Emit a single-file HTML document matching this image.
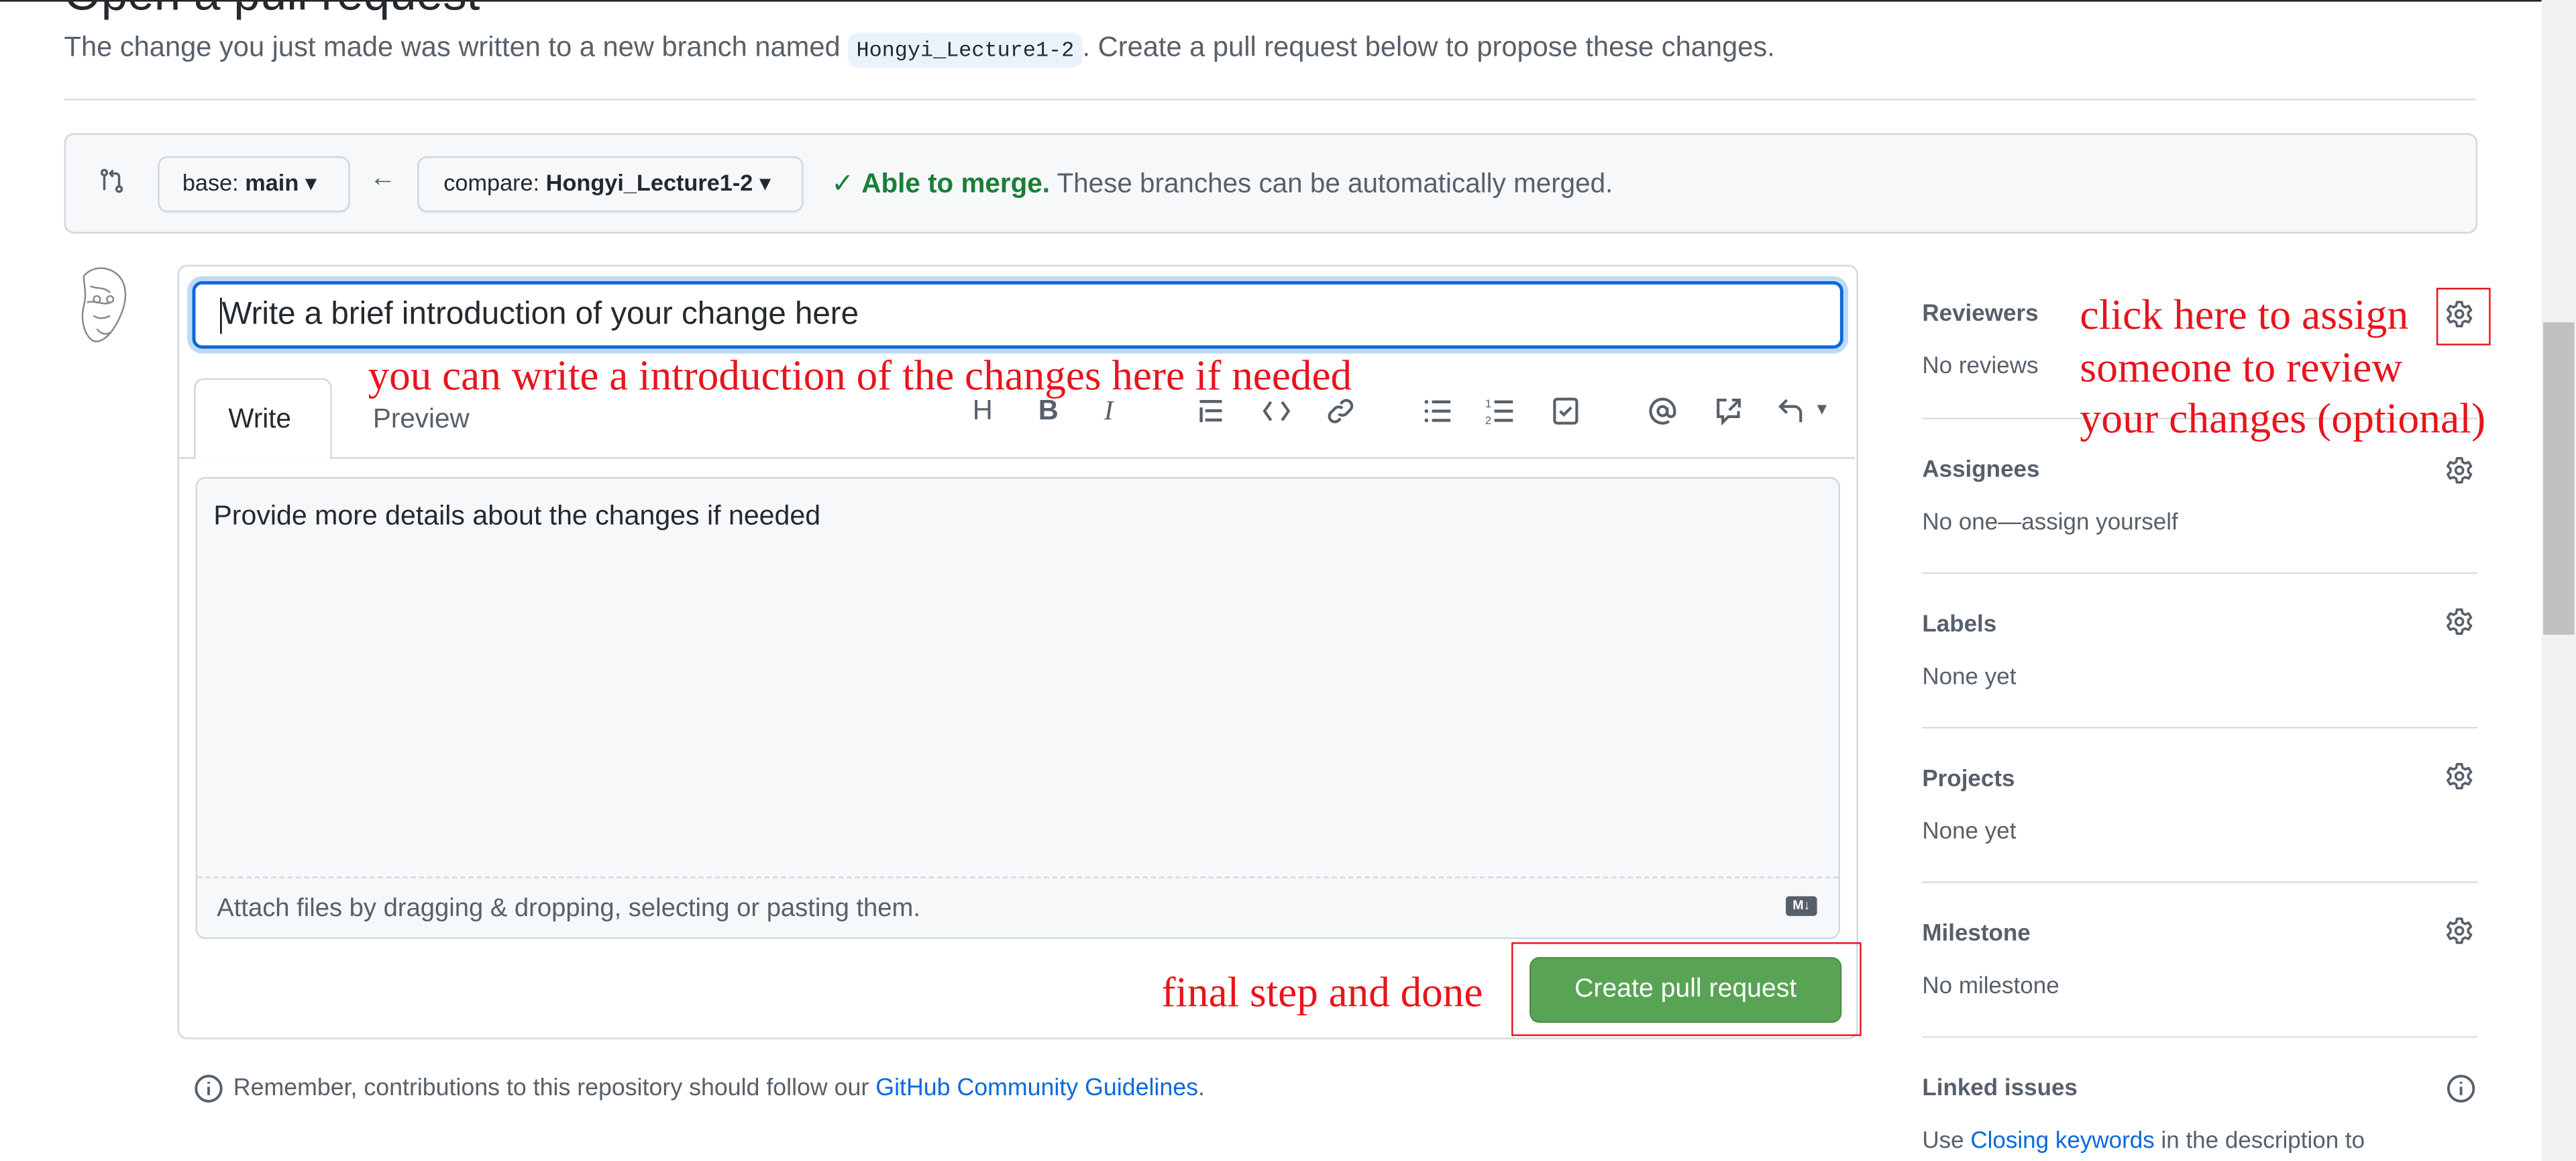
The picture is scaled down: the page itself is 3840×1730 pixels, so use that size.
<!DOCTYPE html>
<html><head><meta charset="utf-8"><style>
html,body{margin:0;padding:0;background:#fff;overflow:hidden}
body{width:3840px;height:1730px;position:relative}
#s{position:absolute;left:0;top:0;width:1568px;height:706px;transform:scale(2.449,2.4504);transform-origin:0 0;font-family:"Liberation Sans",sans-serif;color:#24292f;font-size:14px}
.a{position:absolute;white-space:nowrap}
.red{color:#e8141c;font-family:"Liberation Serif",serif;font-size:24px}
.btn{position:absolute;background:#f6f8fa;border:1px solid #d0d7de;border-radius:6px;box-shadow:0 1px 0 rgba(27,31,36,.04);font-size:14px;line-height:31px;color:#24292f}
.sb{position:absolute;left:1170px;font-size:14.3px;color:#57606a}
.sh{font-weight:bold}
.hr{position:absolute;left:1170px;width:338px;height:1px;background:#d8dee4}
.gear{position:absolute;left:1488px;width:18px;height:18px}
.ic{position:absolute;top:241px;width:18px;height:18px}
</style></head><body><div id="s">
<div class="a" style="left:0;top:0;width:1547px;height:1px;background:#222"></div>
<div class="a" style="left:39px;top:-19px;font-size:29px;color:#24292f">Open a pull request</div>
<div class="a" style="left:39px;top:19px;font-size:17px;color:#57606a">The change you just made was written to a new branch named <span style="font-family:'Liberation Mono',monospace;font-size:13px;background:#eaf2fc;color:#24292f;padding:3px 5px;border-radius:6px">Hongyi_Lecture1-2</span>. Create a pull request below to propose these changes.</div>
<div class="a" style="left:39px;top:60px;width:1468px;height:1px;background:#d8dee4"></div>
<div class="a" style="left:39px;top:81px;width:1467px;height:59px;background:#f6f8fa;border:1px solid #d0d7de;border-radius:6px"></div>
<svg class="a" style="left:60px;top:102px" width="16" height="16" viewBox="0 0 16 16" fill="none" stroke="#57606a" stroke-width="1.4"><circle cx="3.5" cy="3" r="1.6"/><path d="M3.5 4.6v9"/><circle cx="12.5" cy="13" r="1.6"/><path d="M12.5 11.4V5.5a2 2 0 0 0-2-2H7M8.8 1.5L7 3.5l1.8 2"/></svg>
<div class="btn" style="left:96px;top:95px;width:115px;height:32px;"><span style="padding-left:14px">base: <b>main</b> ▾</span></div>
<div class="a" style="left:225px;top:100px;font-size:16px;color:#57606a">←</div>
<div class="btn" style="left:254px;top:95px;width:233px;height:32px;"><span style="padding-left:15px">compare: <b>Hongyi_Lecture1-2</b> ▾</span></div>
<div class="a" style="left:506px;top:102px;font-size:16.5px;color:#57606a"><span style="color:#1a7f37">✓ <b>Able to merge.</b></span> These branches can be automatically merged.</div>
<svg class="a" style="left:43px;top:160px" width="38" height="50" viewBox="0 0 38 50" fill="none" stroke="#888" stroke-width="1"><path d="M8 8c6-8 20-6 24 4s-2 22-6 28-10 10-14 6-6-12-4-20 0-12 0-18z"/><path d="M12 14c4 2 8 0 12 4M10 24c4-2 10 2 14 0M14 32c3 2 6 2 10 0M16 40c2 3 6 4 8 2"/><circle cx="16" cy="22" r="2"/><circle cx="24" cy="22" r="2"/></svg>
<div class="a" style="left:108px;top:161px;width:1021px;height:469px;border:1px solid #d0d7de;border-radius:6px"></div>
<div class="a" style="left:117px;top:171px;width:1001px;height:37px;border:2px solid #0969da;border-radius:6px;box-shadow:0 0 0 3px rgba(9,105,218,.25);background:#fff"></div>
<div class="a" style="left:135px;top:180px;font-size:19.4px;color:#24292f">Write a brief introduction of your change here</div>
<div class="a" style="left:134px;top:181px;width:1px;height:22px;background:#000"></div>
<div class="a" style="left:109px;top:278px;width:1020px;height:1px;background:#d0d7de"></div>
<div class="a" style="left:118px;top:230px;width:82px;height:48px;border:1px solid #d0d7de;border-bottom:none;border-radius:6px 6px 0 0;background:#fff"></div>
<div class="a" style="left:139px;top:246px;font-size:16.5px">Write</div>
<div class="a" style="left:227px;top:246px;font-size:16.5px;color:#57606a">Preview</div>
<div class="a red" style="left:224px;top:214px;font-size:25.8px">you can write a introduction of the changes here if needed</div>
<div class="a" style="left:592px;top:240px;font-size:17px;color:#57606a;font-weight:normal">H</div>
<div class="a" style="left:632px;top:240px;font-size:17px;color:#57606a;font-weight:bold">B</div>
<div class="a" style="left:672px;top:240px;font-size:17px;color:#57606a;font-style:italic;font-family:'Liberation Serif',serif">I</div>
<svg class="ic" style="left:728px" viewBox="0 0 16 16" fill="#57606a"><rect x="2" y="2" width="12" height="1.6"/><rect x="2" y="6" width="1.6" height="8"/><rect x="5" y="7" width="9" height="1.6"/><rect x="5" y="12" width="9" height="1.6"/></svg>
<svg class="ic" style="left:768px" viewBox="0 0 16 16" fill="none" stroke="#57606a" stroke-width="1.5"><path d="M5 3L1.5 8 5 13M11 3l3.5 5L11 13"/></svg>
<svg class="ic" style="left:807px" viewBox="0 0 16 16" fill="none" stroke="#57606a" stroke-width="1.5"><path d="M7 9.5a3 3 0 0 0 4 0l2.5-2.5a3 3 0 0 0-4.2-4.2L8 4M9 6.5a3 3 0 0 0-4 0L2.5 9a3 3 0 0 0 4.2 4.2L8 12"/></svg>
<svg class="ic" style="left:866px" viewBox="0 0 16 16" fill="#57606a"><circle cx="2" cy="3" r="1"/><circle cx="2" cy="8" r="1"/><circle cx="2" cy="13" r="1"/><rect x="5" y="2.2" width="10" height="1.6"/><rect x="5" y="7.2" width="10" height="1.6"/><rect x="5" y="12.2" width="10" height="1.6"/></svg>
<svg class="ic" style="left:904px" viewBox="0 0 16 16" fill="#57606a"><text x="0" y="6" font-size="6" font-family="Liberation Sans">1</text><text x="0" y="15" font-size="6" font-family="Liberation Sans">2</text><rect x="5" y="2.2" width="10" height="1.6"/><rect x="5" y="7.2" width="10" height="1.6"/><rect x="5" y="12.2" width="10" height="1.6"/></svg>
<svg class="ic" style="left:944px" viewBox="0 0 16 16" fill="none" stroke="#57606a" stroke-width="1.5"><rect x="2" y="1.5" width="12" height="13" rx="1.5"/><path d="M5 8l2 2 4-4"/></svg>
<svg class="ic" style="left:1003px" viewBox="0 0 16 16" fill="none" stroke="#57606a" stroke-width="1.5"><circle cx="8" cy="8" r="2.5"/><path d="M10.5 6v3a2 2 0 0 0 4 0V8a6.5 6.5 0 1 0-3 5.5"/></svg>
<svg class="ic" style="left:1043px" viewBox="0 0 16 16" fill="none" stroke="#57606a" stroke-width="1.5"><path d="M7 2H2.5v9H5v3l3-3h5.5V8M10 2h4v4M14 2L8.5 7.5"/></svg>
<svg class="ic" style="left:1082px" viewBox="0 0 16 16" fill="none" stroke="#57606a" stroke-width="1.5"><path d="M5 2L1.5 5.5 5 9M1.5 5.5H9a3.5 3.5 0 0 1 3.5 3.5v5"/></svg>
<div class="a" style="left:1104px;top:244px;font-size:10px;color:#57606a">▼</div>
<div class="a" style="left:119px;top:290px;width:999px;height:279px;background:#f6f8fa;border:1px solid #d0d7de;border-radius:6px"></div>
<div class="a" style="left:120px;top:533px;width:999px;height:0;border-top:1px dashed #d0d7de"></div>
<div class="a" style="left:130px;top:304px;font-size:16.8px">Provide more details about the changes if needed</div>
<div class="a" style="left:132px;top:544px;font-size:15.6px;color:#57606a">Attach files by dragging &amp; dropping, selecting or pasting them.</div>
<div class="a" style="left:1087px;top:545px;width:19px;height:12px;background:#57606a;border-radius:2px;color:#fff;font-size:8px;font-weight:bold;line-height:12px;text-align:center">M↓</div>
<div class="a" style="left:931px;top:582px;width:188px;height:38px;background:#58a454;border:1px solid #4d8f49;border-radius:6px;color:#fff;font-size:16px;line-height:38px;text-align:center;font-weight:500">Create pull request</div>
<div class="a" style="left:920px;top:573px;width:211px;height:55px;border:1.5px solid #e8141c"></div>
<div class="a red" style="left:707px;top:589px;font-size:25.8px">final step and done</div>
<svg class="a" style="left:118px;top:653px" width="18" height="18" viewBox="0 0 16 16" fill="none" stroke="#57606a" stroke-width="1.4"><circle cx="8" cy="8" r="6.8"/><path d="M8 7v4.5M8 4.3v1"/></svg>
<div class="a" style="left:142px;top:654px;font-size:14.6px;color:#57606a">Remember, contributions to this repository should follow our <span style="color:#0969da">GitHub Community Guidelines</span>.</div>
<div class="sb sh" style="top:183px">Reviewers</div>
<div class="sb" style="top:215px">No reviews</div>
<div class="hr" style="top:254px"></div>
<div class="sb sh" style="top:278px">Assignees</div>
<div class="sb" style="top:310px">No one—assign yourself</div>
<div class="hr" style="top:348px"></div>
<div class="sb sh" style="top:372px">Labels</div>
<div class="sb" style="top:404px">None yet</div>
<div class="hr" style="top:442px"></div>
<div class="sb sh" style="top:466px">Projects</div>
<div class="sb" style="top:498px">None yet</div>
<div class="hr" style="top:536px"></div>
<div class="sb sh" style="top:560px">Milestone</div>
<div class="sb" style="top:592px">No milestone</div>
<div class="hr" style="top:630px"></div>
<div class="sb sh" style="top:654px">Linked issues</div>
<div class="sb" style="top:686px">Use <span style="color:#0969da">Closing keywords</span> in the description to</div>
<svg class="a" style="left:1489px;top:653px" width="18" height="18" viewBox="0 0 16 16" fill="none" stroke="#57606a" stroke-width="1.4"><circle cx="8" cy="8" r="6.8"/><path d="M8 7v4.5M8 4.3v1"/></svg>
<svg width="0" height="0" style="position:absolute"><defs><g id="g"><path d="M6.7 1.5h2.6l.4 2 1.4.8 1.9-.7 1.3 2.2-1.5 1.4v1.6l1.5 1.4-1.3 2.2-1.9-.7-1.4.8-.4 2H6.7l-.4-2-1.4-.8-1.9.7L1.7 10.2l1.5-1.4V7.2L1.7 5.8 3 3.6l1.9.7 1.4-.8z" fill="none" stroke="#57606a" stroke-width="1.3" stroke-linejoin="round"/><circle cx="8" cy="8" r="2" fill="none" stroke="#57606a" stroke-width="1.3"/></g></defs></svg>
<svg class="gear" style="top:182px" viewBox="0 0 16 16"><use href="#g"/></svg>
<svg class="gear" style="top:277px" viewBox="0 0 16 16"><use href="#g"/></svg>
<svg class="gear" style="top:369px" viewBox="0 0 16 16"><use href="#g"/></svg>
<svg class="gear" style="top:463px" viewBox="0 0 16 16"><use href="#g"/></svg>
<svg class="gear" style="top:557px" viewBox="0 0 16 16"><use href="#g"/></svg>
<div class="a" style="left:1483px;top:175px;width:31px;height:33px;border:1.5px solid #e8141c"></div>
<div class="a red" style="left:1266px;top:176px;font-size:26px;line-height:31.5px">click here to assign<br>someone to review<br>your changes (optional)</div>
<div class="a" style="left:1547px;top:0;width:21px;height:706px;background:#f1f1f1"></div>
<div class="a" style="left:1548px;top:196px;width:19px;height:190px;background:#c1c1c1"></div>
</div></body></html>
